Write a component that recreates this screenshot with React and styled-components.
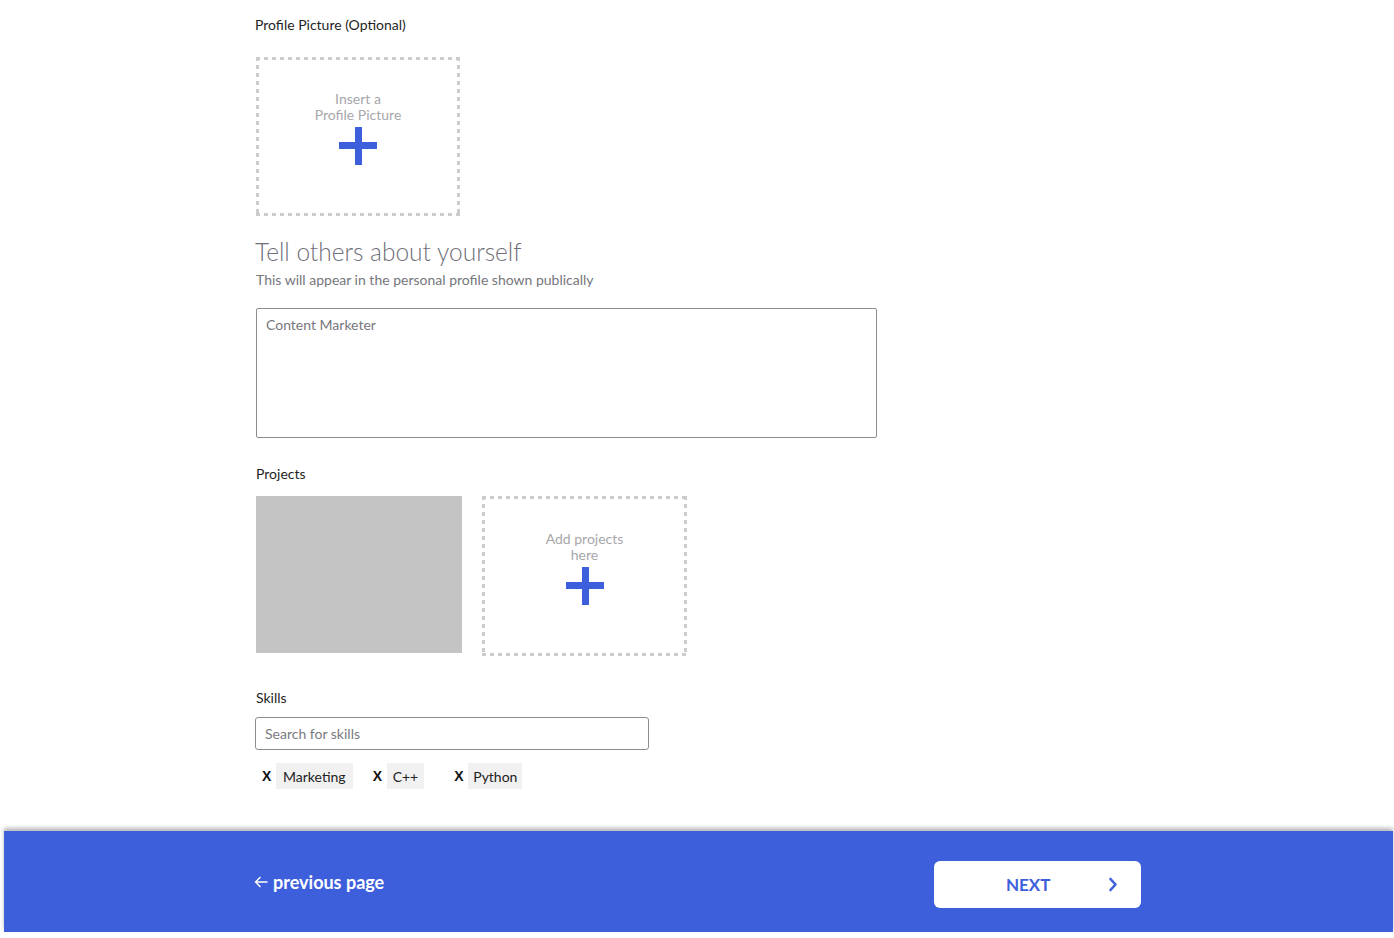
import React from "react";
import styled, { createGlobalStyle } from "styled-components";

const Global = createGlobalStyle`
  html, body { margin: 0; padding: 0; background: #ffffff; }
  body { font-family: Lato, "Noto Sans", "Liberation Sans", sans-serif; color: #1d1d22; }
  * { box-sizing: border-box; }
`;

const BLUE = "#3e5fdc";

const Shell = styled.div`
  width: 1394px;
  min-height: 938px;
  display: flex;
  flex-direction: column;
`;

const Main = styled.main`
  padding: 16px 0 0 255px;
  display: flex;
  flex-direction: column;
  align-items: flex-start;
`;

const Label = styled.div`
  font-size: 14px;
  line-height: 18px;
  color: #1f1f24;
  margin-top: ${(p) => p.$mt || 0}px;
  padding-left: ${(p) => p.$pl || 0}px;
`;

const DottedBox = styled.div`
  width: ${(p) => p.$w}px;
  height: ${(p) => p.$h}px;
  margin-top: ${(p) => p.$mt || 0}px;
  margin-left: ${(p) => p.$ml || 0}px;
  background:
    linear-gradient(to right, #cccccc 50%, transparent 50%) top left / 8px 3px repeat-x,
    linear-gradient(to right, #cccccc 50%, transparent 50%) bottom left / 8px 3px repeat-x,
    linear-gradient(to bottom, #cccccc 50%, transparent 50%) top left / 3px 8px repeat-y,
    linear-gradient(to bottom, #cccccc 50%, transparent 50%) top right / 3px 8px repeat-y;
  display: flex;
  flex-direction: column;
  align-items: center;
  padding-top: ${(p) => p.$pt || 34}px;
`;

const Hint = styled.div`
  font-size: 14px;
  line-height: 16px;
  color: #a7a7ab;
  text-align: center;
`;

const Plus = styled.div`
  position: relative;
  width: 38px;
  height: 38px;
  margin-top: 4px;
  &::before, &::after {
    content: "";
    position: absolute;
    background: ${BLUE};
  }
  &::before { left: 0; right: 0; top: 15px; height: 7px; }
  &::after { top: 0; bottom: 0; left: 16px; width: 7px; }
`;

const Heading = styled.h2`
  margin: 22px 0 0;
  font-size: 24.5px;
  line-height: 28px;
  font-weight: 300;
  color: #6f6f78;
`;

const Sub = styled.p`
  margin: 5px 0 0 1px;
  font-size: 14px;
  line-height: 18px;
  color: #76767c;
`;

const Area = styled.textarea`
  margin: 19px 0 0 1px;
  width: 621px;
  height: 130px;
  border: 1px solid #8c8c92;
  border-radius: 2px;
  padding: 7px 9px;
  font-family: inherit;
  font-size: 14px;
  line-height: 17px;
  resize: none;
  outline: none;
  &::placeholder { color: #77777d; }
`;

const Row = styled.div`
  display: flex;
  align-items: flex-start;
  margin-top: 13px;
  margin-left: 1px;
`;

const Thumb = styled.div`
  width: 206px;
  height: 157px;
  background: #c4c4c4;
`;

const Search = styled.input`
  margin-top: 10px;
  width: 394px;
  height: 33px;
  border: 1px solid #8c8c92;
  border-radius: 3px;
  padding: 0 9px;
  font-family: inherit;
  font-size: 14px;
  outline: none;
  &::placeholder { color: #7a7a80; }
`;

const Tags = styled.div`
  display: flex;
  align-items: center;
  margin-top: 13px;
  padding-left: 7px;
`;

const TagGroup = styled.div`
  display: flex;
  align-items: center;
  gap: 6px;
  margin-left: ${(p) => p.$ml || 0}px;
`;

const Remove = styled.span`
  font-family: "Liberation Sans", Arial, sans-serif;
  font-weight: 700;
  font-size: 14px;
  color: #111;
  width: 8px;
`;

const Chip = styled.span`
  background: #f1f1f1;
  height: 26px;
  padding: 0 ${(p) => p.$px}px;
  display: flex;
  align-items: center;
  font-size: 14px;
  color: #222;
`;

const Footer = styled.footer`
  margin: 42px 0 6px 4px;
  width: 1389px;
  height: 101px;
  background: ${BLUE};
  box-shadow: 0 -3px 4px rgba(0, 0, 0, 0.28);
  display: flex;
  align-items: flex-start;
  padding: 30px 0 0 250px;
`;

const FooterInner = styled.div`
  width: 887px;
  height: 47px;
  display: flex;
  align-items: center;
  justify-content: space-between;
`;

const Back = styled.a`
  display: flex;
  align-items: center;
  gap: 5px;
  color: #ffffff;
  font-size: 18px;
  font-weight: 700;
  text-decoration: none;
  margin-top: -5px;
  cursor: pointer;
`;

const NextBtn = styled.button`
  width: 207px;
  height: 47px;
  background: #ffffff;
  border: none;
  border-radius: 6px;
  display: flex;
  align-items: center;
  padding: 0 23px 0 72px;
  justify-content: space-between;
  color: ${BLUE};
  font-family: inherit;
  font-size: 17px;
  font-weight: 700;
  cursor: pointer;
`;

const tags = [
  { name: "Marketing", ml: 0, px: 7 },
  { name: "C++", ml: 20, px: 6 },
  { name: "Python", ml: 30, px: 5 },
];

export default function App() {
  return (
    <>
      <Global />
      <Shell>
        <Main>
          <Label>Profile Picture (Optional)</Label>
          <DottedBox $w={204} $h={159} $mt={23} $ml={1}>
            <Hint>
              Insert a
              <br />
              Profile Picture
            </Hint>
            <Plus />
          </DottedBox>

          <Heading>Tell others about yourself</Heading>
          <Sub>This will appear in the personal profile shown publically</Sub>
          <Area placeholder="Content Marketer" />

          <Label $mt={27} $pl={1}>Projects</Label>
          <Row>
            <Thumb />
            <DottedBox $w={205} $h={160} $ml={20} $pt={35}>
              <Hint>
                Add projects
                <br />
                here
              </Hint>
              <Plus />
            </DottedBox>
          </Row>

          <Label $mt={33} $pl={1}>Skills</Label>
          <Search placeholder="Search for skills" />
          <Tags>
            {tags.map((t) => (
              <TagGroup key={t.name} $ml={t.ml}>
                <Remove>X</Remove>
                <Chip $px={t.px}>{t.name}</Chip>
              </TagGroup>
            ))}
          </Tags>
        </Main>

        <Footer>
          <FooterInner>
            <Back>
              <svg width="14" height="12" viewBox="0 0 14 12" fill="none" stroke="#fff" strokeWidth="1.4">
                <path d="M13.5 6H1.5M6.5 1L1.5 6l5 5" />
              </svg>
              previous page
            </Back>
            <NextBtn>
              NEXT
              <svg width="10" height="15" viewBox="0 0 10 15" fill="none" stroke={BLUE} strokeWidth="2.6" strokeLinecap="round" strokeLinejoin="round">
                <path d="M2.5 2l5 5.5-5 5.5" />
              </svg>
            </NextBtn>
          </FooterInner>
        </Footer>
      </Shell>
    </>
  );
}
